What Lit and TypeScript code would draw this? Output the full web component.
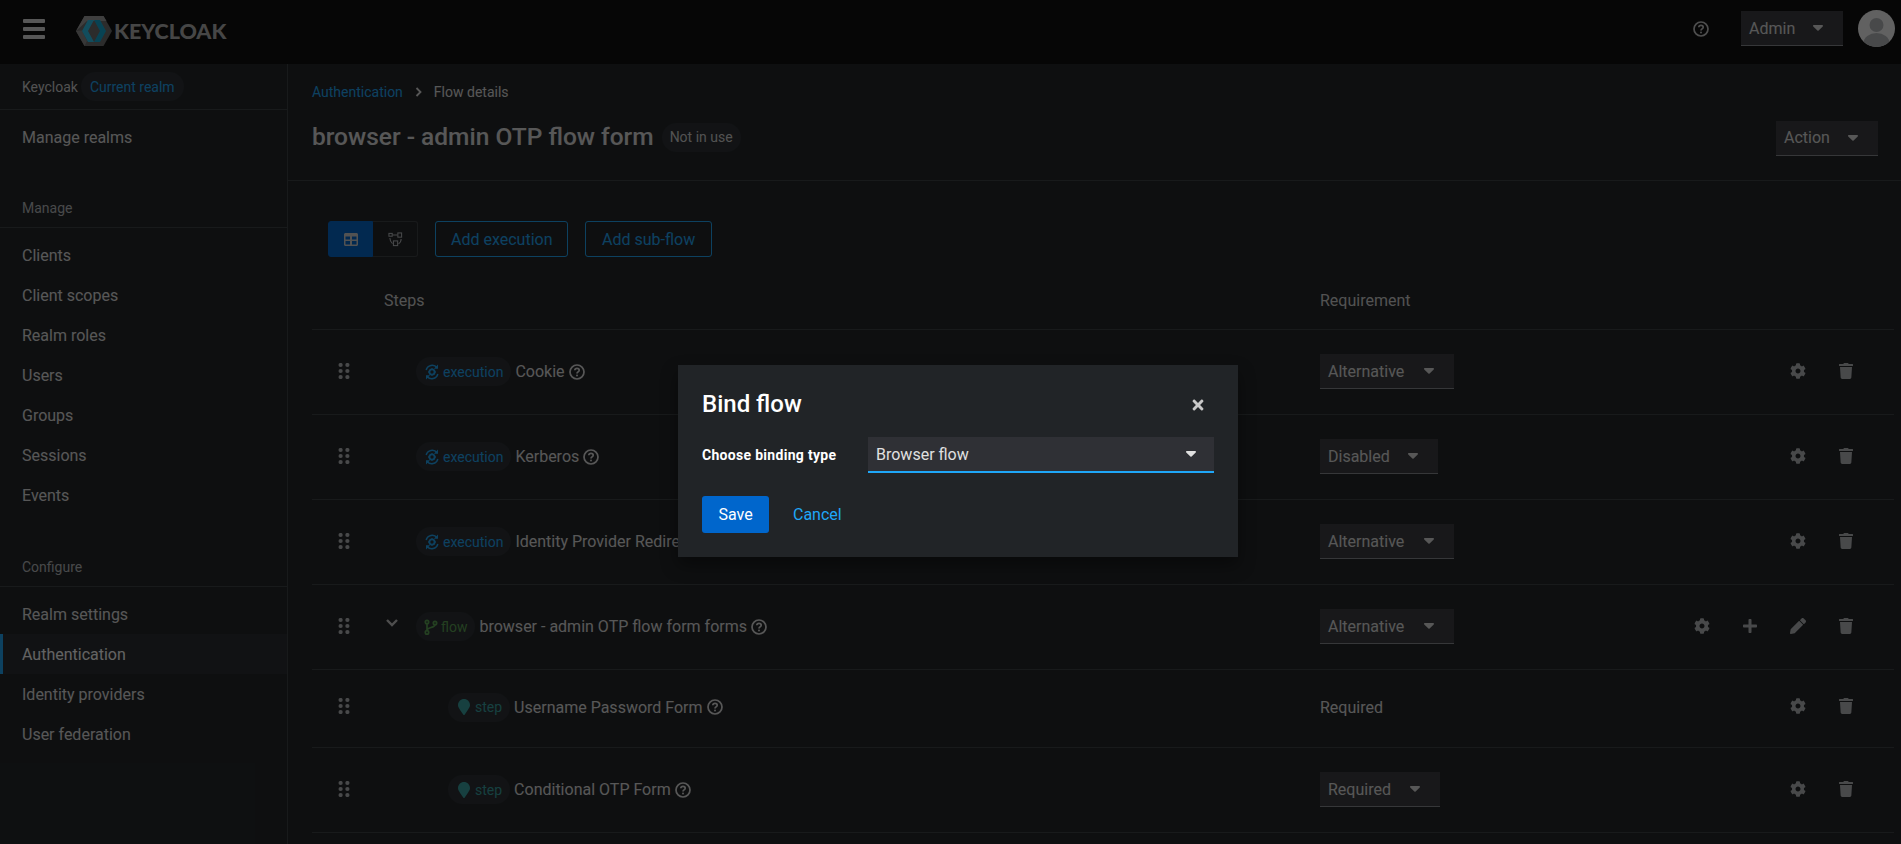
import { LitElement, html, css, svg } from "lit";
import { customElement } from "lit/decorators.js";

const GEAR = "M487.4 315.7l-42.6-24.6c4.3-23.2 4.3-47 0-70.2l42.6-24.6c4.9-2.8 7.1-8.6 5.5-14-11.1-35.6-30-67.8-54.7-94.6-3.8-4.1-10-5.1-14.8-2.3L380.8 110c-17.9-15.4-38.5-27.3-60.8-35.1V25.8c0-5.6-3.9-10.5-9.4-11.7-36.7-8.2-74.3-7.8-109.2 0-5.5 1.2-9.4 6.1-9.4 11.7V75c-22.2 7.9-42.8 19.8-60.8 35.1L88.7 85.5c-4.9-2.8-11-1.9-14.8 2.3-24.7 26.7-43.6 58.9-54.7 94.6-1.7 5.4.6 11.2 5.5 14L67.3 221c-4.3 23.2-4.3 47 0 70.2l-42.6 24.6c-4.9 2.8-7.1 8.6-5.5 14 11.1 35.6 30 67.8 54.7 94.6 3.8 4.1 10 5.1 14.8 2.3l42.6-24.6c17.9 15.4 38.5 27.3 60.8 35.1v49.2c0 5.6 3.9 10.5 9.4 11.7 36.7 8.2 74.3 7.8 109.2 0 5.5-1.2 9.4-6.1 9.4-11.7v-49.2c22.2-7.9 42.8-19.8 60.8-35.1l42.6 24.6c4.9 2.8 11 1.9 14.8-2.3 24.7-26.7 43.6-58.9 54.7-94.6 1.5-5.5-.7-11.3-5.6-14.1zM256 336c-44.1 0-80-35.9-80-80s35.9-80 80-80 80 35.9 80 80-35.9 80-80 80z";
const TRASH = "M432 32H312l-9.4-18.7A24 24 0 0 0 281.1 0H166.8a23.72 23.72 0 0 0-21.4 13.3L136 32H16A16 16 0 0 0 0 48v32a16 16 0 0 0 16 16h416a16 16 0 0 0 16-16V48a16 16 0 0 0-16-16zM53.2 467a48 48 0 0 0 47.9 45h245.8a48 48 0 0 0 47.9-45L416 128H32z";
const PLUS = "M416 208H272V64c0-17.67-14.33-32-32-32h-32c-17.67 0-32 14.33-32 32v144H32c-17.67 0-32 14.33-32 32v32c0 17.67 14.33 32 32 32h144v144c0 17.67 14.33 32 32 32h32c17.67 0 32-14.33 32-32V304h144c17.67 0 32-14.33 32-32v-32c0-17.67-14.33-32-32-32z";
const PENCIL = "M497.9 142.1l-46.1 46.1c-4.7 4.7-12.3 4.7-17 0l-111-111c-4.7-4.7-4.7-12.3 0-17l46.1-46.1c18.7-18.7 49.1-18.7 67.9 0l60.1 60.1c18.8 18.7 18.8 49.1 0 67.9zM284.2 99.8L21.6 362.4.4 483.9c-2.9 16.4 11.4 30.6 27.8 27.8l121.5-21.3 262.6-262.6c4.7-4.7 4.7-12.3 0-17l-111-111c-4.8-4.7-12.4-4.7-17.1 0z";
const TIMES = "M242.72 256l100.07-100.07c12.28-12.28 12.28-32.19 0-44.48l-22.24-22.24c-12.28-12.28-32.19-12.28-44.48 0L176 189.28 75.93 89.21c-12.28-12.28-32.19-12.28-44.48 0L9.21 111.45c-12.28 12.28-12.28 32.19 0 44.48L109.28 256 9.21 356.07c-12.28 12.28-12.28 32.19 0 44.48l22.24 22.24c12.28 12.28 32.2 12.28 44.48 0L176 322.72l100.07 100.07c12.28 12.28 32.2 12.28 44.48 0l22.24-22.24c12.28-12.28 12.28-32.19 0-44.48L242.72 256z";
const MARKER = "M172.268 501.67C26.97 291.031 0 255.784 0 192 0 85.961 85.961 0 192 0s192 85.961 192 192c0 63.784-26.97 99.031-172.268 309.67-9.535 13.774-29.93 13.773-39.464 0z";

const icon = (d: string, vb: string, size = 16) =>
  html`<svg width=${size} height=${size} viewBox=${vb} fill="currentColor"><path d=${d}></path></svg>`;

const help = (size = 16) => html`<svg width=${size} height=${size} viewBox="0 0 16 16" fill="none" stroke="currentColor">
  <circle cx="8" cy="8" r="7" stroke-width="1.700"></circle>
  <path d="M5.800 6.300C5.900 5 6.800 4.300 8 4.300c1.300 0 2.200.8 2.200 1.900 0 1.700-2.200 1.700-2.200 3.300" stroke-width="1.700" fill="none"></path>
  <circle cx="8" cy="11.600" r="1" fill="currentColor" stroke="none"></circle>
</svg>`;

const grip = html`<svg width="12" height="16" viewBox="0 0 12 16" fill="currentColor">
  ${[2, 8, 14].map((y) => svg`<circle cx="2.600" cy=${y} r="2.100"></circle><circle cx="9.400" cy=${y} r="2.100"></circle>`)}
</svg>`;

const caret = html`<svg class="caret" width="10" height="6" viewBox="0 0 12 7" fill="currentColor"><path d="M1 0h10c.9 0 1.300 1 .7 1.600l-5 5c-.4.4-1 .4-1.400 0l-5-5C-.3 1-.1 0 1 0z"></path></svg>`;

const execIcon = html`<svg width="16" height="16" viewBox="0 0 16 16" fill="none" stroke="currentColor" stroke-width="1.500">
  <path d="M2.200 6A6.100 6.100 0 0 1 13 3.800"></path>
  <path d="M13.800 10A6.100 6.100 0 0 1 3 12.200"></path>
  <path d="M14 .6v4.200H9.900z" fill="currentColor" stroke="none"></path>
  <path d="M2 15.400v-4.200h4.100z" fill="currentColor" stroke="none"></path>
  <circle cx="8" cy="8" r="2.600" stroke-width="1.800"></circle>
  <path d="M8 4.200v1.200M8 10.600v1.200M4.200 8h1.200M10.600 8h1.200" stroke-width="1.400"></path>
</svg>`;

const flowIcon = html`<svg width="14" height="16" viewBox="0 0 14 16" fill="none" stroke="currentColor" stroke-width="1.700">
  <circle cx="3" cy="3" r="1.700"></circle>
  <circle cx="3" cy="13.400" r="1.700"></circle>
  <circle cx="11" cy="4" r="1.700"></circle>
  <path d="M3 4.700v7M11 5.700c0 3.300-8 2.400-8 5.600"></path>
</svg>`;

const tableIcon = html`<svg width="14" height="13" viewBox="0 0 14 13" fill="currentColor"><path d="M1.500 0h11C13.300 0 14 .7 14 1.500v10c0 .8-.7 1.500-1.500 1.500h-11C.7 13 0 12.300 0 11.500v-10C0 .7.700 0 1.500 0zM1.500 3.500v3h4.500v-3zM8 3.500v3h4.500v-3zM1.500 8v3.500h4.500V8zM8 8v3.500h4.500V8z" fill-rule="evenodd"></path></svg>`;

const topologyIcon = html`<svg width="15" height="15" viewBox="0 0 16 16" fill="none" stroke="currentColor" stroke-width="1.100">
  <rect x="1" y="1.500" width="3.500" height="3"></rect>
  <rect x="10.500" y="1" width="4" height="4.500"></rect>
  <rect x="5.800" y="9.500" width="4.500" height="5"></rect>
  <path d="M5 3.200h5M2 6.500c0 2.500 1 4.500 2.800 6M14 7.500c0 2.500-1 4-2.800 5"></path>
</svg>`;

const logoIcon = html`<svg width="36" height="32" viewBox="0 0 36 32">
  <path d="M0 16 8.500 1h19L36 16l-8.500 15h-19z" fill="#6e6e6e"></path>
  <path d="M0 16 8.500 1h19l3 5H11z" fill="#a0a0a0"></path>
  <path d="M0 16l6-.5L11 26l-2.500 5z" fill="#8c8c8c"></path>
  <path d="M12 5 6 16l6 11h6l-6-11 6-11z" fill="#2cc4f0"></path>
  <path d="M18 5l6 11-6 11h6l6-11-6-11z" fill="#12acd8"></path>
</svg>`;

interface Row {
  kind: "execution" | "flow" | "step";
  name: string;
  req: string;
  width?: number;
  extra?: boolean;
}

const ROWS: Row[] = [
  { kind: "execution", name: "Cookie", req: "Alternative", width: 134 },
  { kind: "execution", name: "Kerberos", req: "Disabled", width: 118 },
  { kind: "execution", name: "Identity Provider Redirector", req: "Alternative", width: 134 },
  { kind: "flow", name: "browser - admin OTP flow form forms", req: "Alternative", width: 134, extra: true },
  { kind: "step", name: "Username Password Form", req: "Required" },
  { kind: "step", name: "Conditional OTP Form", req: "Required", width: 120 },
];

@customElement("app-root")
export class AppRoot extends LitElement {
  static styles = css`
    :host {
      display: block;
      position: relative;
      height: 844px;
      overflow: hidden;
      background: #212427;
      color: #e0e0e0;
      font-family: "Roboto", "Liberation Sans", sans-serif;
      font-size: 16px;
      --blue: #1fa7f8;
    }
    svg {
      display: block;
      flex: none;
    }

    .masthead {
      height: 64px;
      box-sizing: border-box;
      background: #0c0c0c;
      display: flex;
      align-items: center;
      padding: 0 6px 7px 23px;
    }
    .burger {
      width: 22px;
      display: grid;
      gap: 4px;
      margin-right: 31px;
    }
    .burger span {
      height: 4px;
      border-radius: 1px;
      background: #e0e0e0;
    }
    .logo {
      display: flex;
      align-items: center;
      gap: 2px;
      flex: 1;
      margin-top: 5px;
      font-family: "Lato", sans-serif;
      font-weight: 900;
      font-size: 21.500px;
      color: #b4b4b4;
    }
    .top-help {
      margin-right: 32px;
      color: #c8c8c8;
    }
    .avatar {
      width: 37px;
      height: 37px;
      margin-left: 15px;
      border-radius: 50%;
      overflow: hidden;
    }

    .select {
      height: 35px;
      box-sizing: border-box;
      display: flex;
      align-items: center;
      justify-content: space-between;
      padding: 0 20px 0 8px;
      background: #3b3c3f;
      border-bottom: 1px solid #8a8d90;
      font-size: 16px;
      color: #e0e0e0;
    }

    .layout {
      display: grid;
      grid-template-columns: 288px 1fr;
      height: 780px;
    }

    .sidebar {
      border-right: 1px solid #3c3f42;
      box-sizing: border-box;
    }
    .realm {
      height: 45px;
      padding-left: 22px;
      display: flex;
      align-items: center;
      gap: 3px;
      font-size: 14px;
      color: #d2d2d2;
      border-bottom: 1px solid #3c3f42;
    }
    .realm .chip {
      color: var(--blue);
      padding: 0 9px;
    }
    .nav-item {
      height: 40px;
      display: flex;
      align-items: center;
      padding-left: 22px;
    }
    .nav-item.realms {
      margin-top: 7px;
      margin-bottom: 1px;
    }
    .nav-title {
      height: 41px;
      display: flex;
      align-items: center;
      padding: 2px 0 0 22px;
      box-sizing: border-box;
      margin: 30px 0 7px;
      font-size: 14px;
      color: #b8bbbe;
      border-bottom: 1px solid #3c3f42;
    }
    .nav-title.second {
      margin-top: 31px;
    }
    .nav-item.active {
      background: #292c30;
      box-shadow: inset 3px 0 0 var(--blue);
      color: #fff;
    }

    .main {
      min-width: 0;
    }
    .page-head {
      height: 117px;
      box-sizing: border-box;
      padding: 0 23px 0 24px;
      border-bottom: 1px solid #3c3f42;
    }
    .crumbs {
      display: flex;
      align-items: center;
      gap: 10px;
      height: 56px;
      font-size: 14px;
    }
    .crumbs a {
      color: var(--blue);
    }
    .crumbs svg {
      margin: 0 2px;
    }
    .title-row {
      display: flex;
      align-items: center;
      height: 34px;
    }
    h1 {
      margin: 0;
      font-size: 24.500px;
      font-weight: 500;
      line-height: 34px;
    }
    .title-row .chip {
      margin-left: 8px;
      color: #d2d2d2;
      padding: 0 8px;
    }
    .title-row .select {
      margin: 2px 0 0 auto;
    }

    .chip {
      display: inline-flex;
      align-items: center;
      gap: 3px;
      height: 29px;
      box-sizing: border-box;
      padding: 0 8px;
      border-radius: 15px;
      background: #2a2e33;
      font-size: 14px;
      white-space: nowrap;
    }
    .chip.execution {
      color: var(--blue);
    }
    .chip.flow {
      color: #5ba352;
    }
    .chip.step {
      color: #37a3a3;
    }

    .content {
      padding: 40px 7px 0 24px;
    }
    .toolbar {
      display: flex;
      align-items: stretch;
      height: 36px;
      margin-left: 16px;
    }
    .toggle {
      display: flex;
      margin-right: 17px;
    }
    .toggle div {
      width: 45px;
      display: flex;
      align-items: center;
      justify-content: center;
      box-sizing: border-box;
      border: 1px solid #3c3f42;
      color: #b8bbbe;
    }
    .toggle div:first-child {
      background: #06c;
      border-color: #06c;
      color: #d2d2d2;
      border-radius: 3px 0 0 3px;
    }
    .toggle div:last-child {
      border-left: 0;
      border-radius: 0 3px 3px 0;
    }
    .outline {
      display: flex;
      align-items: center;
      padding: 0 15px;
      margin-right: 17px;
      border: 1px solid var(--blue);
      border-radius: 3px;
      color: var(--blue);
      white-space: nowrap;
    }
    .outline.wide {
      padding: 0 15.500px;
    }

    .table-row {
      display: grid;
      grid-template-columns: 72px 936px 1fr auto;
      align-items: center;
      border-bottom: 1px solid #3c3f42;
      height: 85px;
      box-sizing: border-box;
      padding: 0 24px 1px 0;
    }
    .table-row.plain {
      height: 78px;
      padding-bottom: 3px;
    }
    .table-row.head {
      height: 73px;
      padding-top: 16px;
      color: #d2d2d2;
    }
    .drag {
      padding-left: 26px;
      margin-bottom: 2px;
      color: #b8bbbe;
    }
    .step-cell {
      display: flex;
      align-items: center;
      min-width: 0;
      gap: 4px;
    }
    .execution-row {
      padding-left: 32px;
    }
    .step-row {
      padding-left: 64px;
    }
    .chev {
      width: 28px;
      color: #c8c8c8;
      margin-bottom: 8px;
    }
    .help {
      color: #e0e0e0;
    }
    .name {
      white-space: nowrap;
    }
    .actions {
      display: flex;
      margin-bottom: 2px;
      color: #b8bbbe;
    }
    .actions div {
      width: 48px;
      display: flex;
      justify-content: center;
    }

    .backdrop {
      position: absolute;
      inset: 0;
      background: rgba(3, 3, 3, 0.62);
    }
    .modal {
      position: absolute;
      left: 678px;
      top: 365px;
      width: 560px;
      box-sizing: border-box;
      padding: 24px;
      background: #212427;
      box-shadow: 0 8px 16px rgba(3, 3, 3, 0.4);
    }
    .modal-head {
      display: flex;
      justify-content: space-between;
      align-items: center;
      color: #fff;
    }
    .modal h2 {
      margin: 0;
      font-size: 24px;
      font-weight: 500;
      line-height: 31px;
    }
    .close {
      color: #c8c8c8;
      margin-right: 8px;
    }
    .modal-body {
      display: flex;
      align-items: center;
      margin-top: 17px;
      height: 36px;
    }
    .modal-body label {
      width: 166px;
      font-size: 14px;
      font-weight: 700;
      letter-spacing: 0.3px;
      color: #fff;
    }
    .modal-select {
      flex: 1;
      height: 36px;
      box-sizing: border-box;
      display: flex;
      align-items: center;
      justify-content: space-between;
      padding: 0 18px 0 8px;
      background: #2f3035;
      border-bottom: 2px solid var(--blue);
      color: #e0e0e0;
    }
    .modal-actions {
      display: flex;
      align-items: center;
      margin-top: 23px;
      height: 37px;
    }
    .save {
      width: 67px;
      height: 37px;
      display: flex;
      align-items: center;
      justify-content: center;
      background: #06c;
      border-radius: 3px;
      color: #fff;
    }
    .cancel {
      margin-left: 24px;
      color: var(--blue);
    }
  `;

  private select(label: string, width: number) {
    return html`<div class="select" style="width:${width}px">${label}${caret}</div>`;
  }

  private renderRow(r: Row) {
    const indent = r.kind === "execution" ? "execution-row" : r.kind === "step" ? "step-row" : "";
    const chipIcon =
      r.kind === "execution"
        ? execIcon
        : r.kind === "flow"
          ? flowIcon
          : icon(MARKER, "0 0 384 512");
    return html`<div class="table-row ${r.width ? "" : "plain"}">
      <div class="drag">${grip}</div>
      <div class="step-cell ${indent}">
        ${r.kind === "flow"
          ? html`<div class="chev"><svg width="16" height="10" viewBox="0 0 16 10" fill="none" stroke="currentColor" stroke-width="2.400"><path d="M3 2l5 5 5-5"></path></svg></div>`
          : ""}
        <span class="chip ${r.kind}">${chipIcon}${r.kind}</span>
        <span class="name">${r.name}</span>
        <span class="help">${help()}</span>
      </div>
      <div>${r.width ? this.select(r.req, r.width) : r.req}</div>
      <div class="actions">
        <div>${icon(GEAR, "0 0 512 512")}</div>
        ${r.extra
          ? html`<div>${icon(PLUS, "0 0 448 512")}</div>
              <div>${icon(PENCIL, "0 0 512 512")}</div>`
          : ""}
        <div>${icon(TRASH, "0 0 448 512")}</div>
      </div>
    </div>`;
  }

  render() {
    const manage = ["Clients", "Client scopes", "Realm roles", "Users", "Groups", "Sessions", "Events"];
    const configure = ["Realm settings", "Authentication", "Identity providers", "User federation"];
    return html`
      <header class="masthead">
        <div class="burger"><span></span><span></span><span></span></div>
        <div class="logo">${logoIcon}<span>KEYCLOAK</span></div>
        <div class="top-help">${help()}</div>
        ${this.select("Admin", 102)}
        <div class="avatar">
          <svg width="37" height="37" viewBox="0 0 37 37">
            <rect width="37" height="37" fill="#fafafa"></rect>
            <circle cx="18.500" cy="15" r="7" fill="#b8bbbe"></circle>
            <ellipse cx="18.500" cy="33" rx="13" ry="10" fill="#b8bbbe"></ellipse>
          </svg>
        </div>
      </header>
      <div class="layout">
        <nav class="sidebar">
          <div class="realm">Keycloak <span class="chip">Current realm</span></div>
          <div class="nav-item realms">Manage realms</div>
          <div class="nav-title">Manage</div>
          ${manage.map((m) => html`<div class="nav-item">${m}</div>`)}
          <div class="nav-title second">Configure</div>
          ${configure.map(
            (m) => html`<div class="nav-item ${m === "Authentication" ? "active" : ""}">${m}</div>`
          )}
        </nav>
        <main class="main">
          <div class="page-head">
            <div class="crumbs">
              <a>Authentication</a>
              <svg width="7" height="10" viewBox="0 0 7 10" fill="none" stroke="currentColor" stroke-width="1.800"><path d="M1.500 1l4 4-4 4"></path></svg>
              <span>Flow details</span>
            </div>
            <div class="title-row">
              <h1>browser - admin OTP flow form</h1>
              <span class="chip">Not in use</span>
              ${this.select("Action", 102)}
            </div>
          </div>
          <div class="content">
            <div class="toolbar">
              <div class="toggle">
                <div>${tableIcon}</div>
                <div>${topologyIcon}</div>
              </div>
              <div class="outline">Add execution</div>
              <div class="outline wide">Add sub-flow</div>
            </div>
            <div class="table-row head">
              <div></div>
              <div>Steps</div>
              <div>Requirement</div>
              <div></div>
            </div>
            ${ROWS.map((r) => this.renderRow(r))}
          </div>
        </main>
      </div>
      <div class="backdrop"></div>
      <section class="modal">
        <div class="modal-head">
          <h2>Bind flow</h2>
          <span class="close">${icon(TIMES, "0 0 352 512")}</span>
        </div>
        <div class="modal-body">
          <label>Choose binding type</label>
          <div class="modal-select">Browser flow ${caret}</div>
        </div>
        <div class="modal-actions">
          <div class="save">Save</div>
          <div class="cancel">Cancel</div>
        </div>
      </section>
    `;
  }
}
